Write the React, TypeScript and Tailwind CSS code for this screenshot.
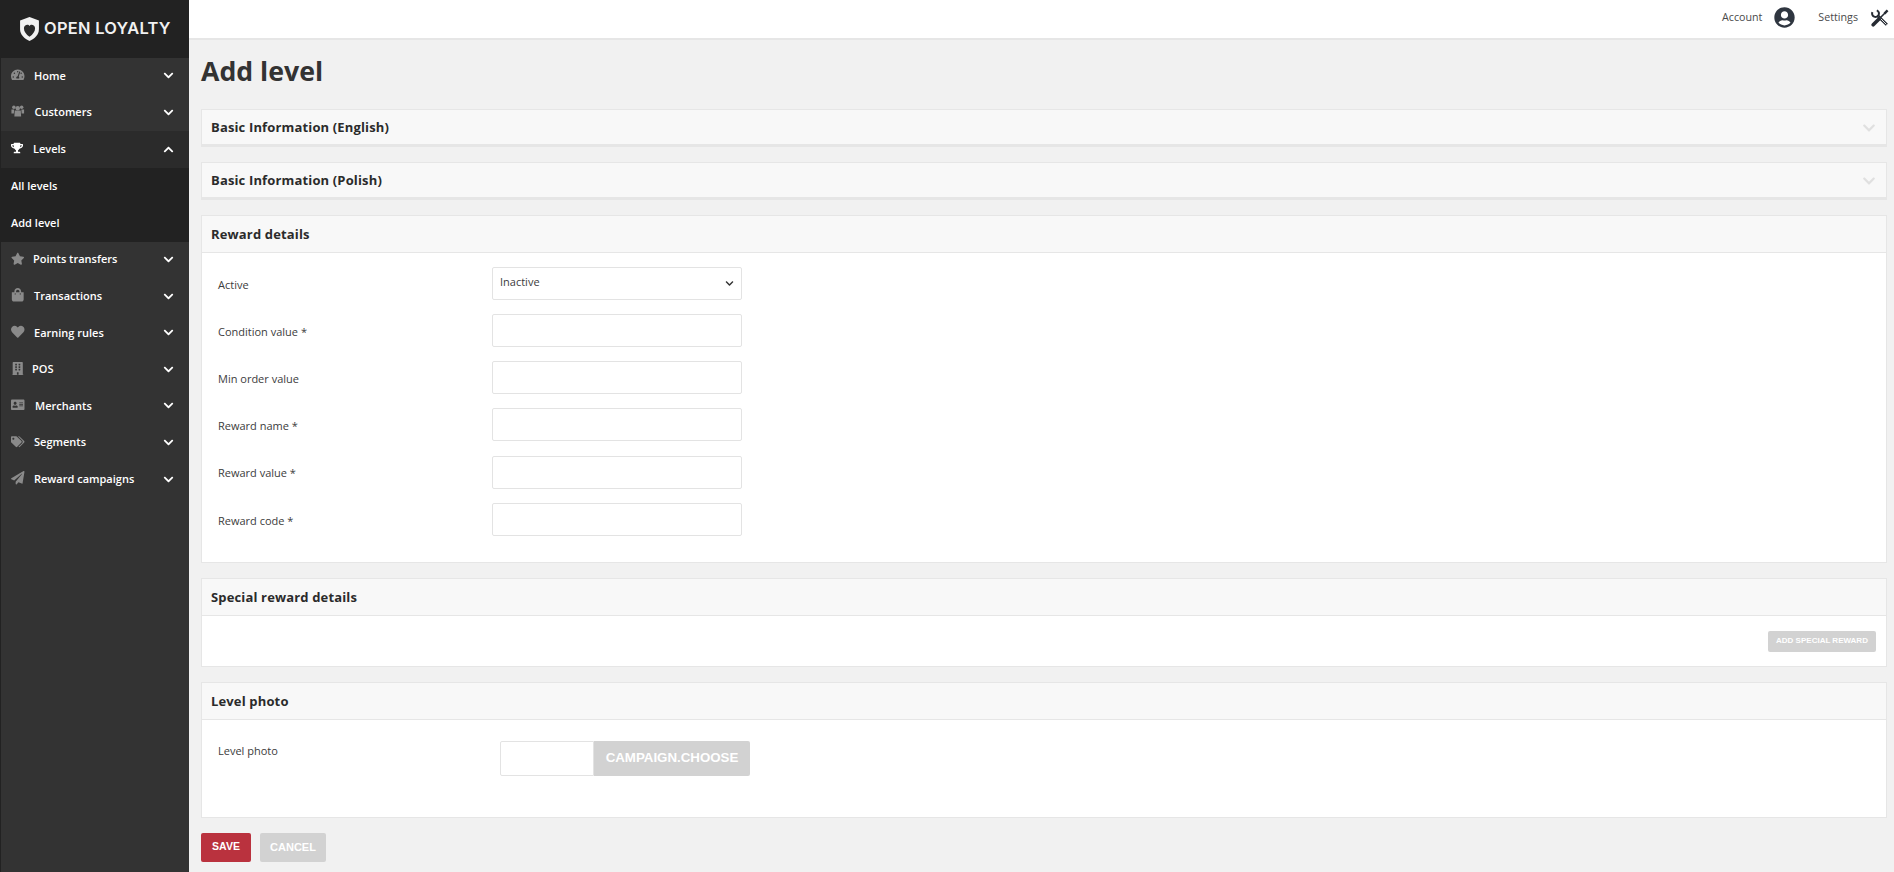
import React from "react";
import {
  FaAddressCard,
  FaBuilding,
  FaChevronDown,
  FaChevronUp,
  FaHeart,
  FaPaperPlane,
  FaShoppingBag,
  FaStar,
  FaTachometerAlt,
  FaTags,
  FaTrophy,
  FaUserCircle,
} from "react-icons/fa";

function GroupIcon({ className }: { className?: string }) {
  return (
    <svg viewBox="0 0 16 14" fill="currentColor" className={className} width="1em" height="0.9em">
      <circle cx="3.4" cy="2.4" r="2.1" />
      <circle cx="12.6" cy="2.4" r="2.1" />
      <circle cx="8" cy="3.6" r="2.6" />
      <path d="M0.5 5h3.2L3.4 10H0.5zM12.3 5h3.2v5h-2.9zM4.4 6.4h7.2l.4 7H4z" />
    </svg>
  );
}

function ToolsIcon() {
  return (
    <svg viewBox="0 0 18 18" className="h-[18px] w-[18px] text-[#262b33]" fill="none" stroke="currentColor">
      <path d="M6.5 6.5 15.8 15.8" strokeWidth="3" />
      <path d="M7.5 7.5 15.4 15.4" strokeWidth="0.9" stroke="#ffffff" />
      <path d="M1.4 3.2A3.4 3.4 0 1 0 5.8 1.4" strokeWidth="2" />
      <path d="M2.2 15.8 8 10" strokeWidth="3.6" strokeLinecap="round" />
      <path d="M8 10 14 4" strokeWidth="1.6" />
      <path d="M13.4 4.6 16.6 1.4" strokeWidth="2.4" />
    </svg>
  );
}

const topItems = [
  { label: "Home", icon: FaTachometerAlt, gap: "w-[23px]" },
  { label: "Customers", icon: GroupIcon, gap: "w-[23.5px]" },
];

const bottomItems = [
  { label: "Points transfers", icon: FaStar, gap: "w-[22px]" },
  { label: "Transactions", icon: FaShoppingBag, gap: "w-[23px]" },
  { label: "Earning rules", icon: FaHeart, gap: "w-[23px]" },
  { label: "POS", icon: FaBuilding, gap: "w-[21px]" },
  { label: "Merchants", icon: FaAddressCard, gap: "w-[24px]" },
  { label: "Segments", icon: FaTags, gap: "w-[23px]" },
  { label: "Reward campaigns", icon: FaPaperPlane, gap: "w-[23px]" },
];

const fields = ["Condition value *", "Min order value", "Reward name *", "Reward value *", "Reward code *"];

function NavRow({ label, icon: Icon, gap }: { label: string; icon: React.ElementType; gap: string }) {
  return (
    <div className="flex h-[36.6px] items-center pb-[1px] pl-[10px] pr-[15px] text-[11px] font-semibold text-white">
      <span className={`${gap} shrink-0`}>
        <Icon className="-mt-[2px] text-[13.5px] text-[#8a8a8a]" />
      </span>
      <span className="flex-1">{label}</span>
      <FaChevronDown className="text-[11px]" />
    </div>
  );
}

function Card({ title, children, collapsed }: { title: string; children?: React.ReactNode; collapsed?: boolean }) {
  return (
    <section className={`mb-[15px] border border-[#e6e6e6] bg-white ${collapsed ? "border-b-[3px]" : ""}`}>
      <header
        className={`flex items-center justify-between bg-[#f8f8f8] pl-[9px] pr-[10px] ${collapsed ? "h-[34px] pt-[2px]" : "h-[37px] border-b border-[#e6e6e6] pt-[1px]"}`}
      >
        <h2 className="text-[13px] font-bold tracking-[0.15px] text-[#2b2b2b]">{title}</h2>
        {collapsed && <FaChevronDown className="text-[14px] text-[#e0e0e0]" />}
      </header>
      {children}
    </section>
  );
}

function TextField({ label }: { label: string }) {
  return (
    <div className="flex h-[33px] items-center">
      <label className="w-[274px] pt-[3px] text-[11px] text-[#3c3c3c]">{label}</label>
      <div className="h-[33px] w-[250px] rounded-[2px] border border-[#e3e3e3] bg-white" />
    </div>
  );
}

export default function App() {
  return (
    <div className="flex h-screen w-full overflow-hidden bg-[#f1f1f1] font-['Open_Sans',sans-serif]">
      <aside className="w-[189px] shrink-0 border-l border-[#222] bg-[#333333]">
        <div className="flex h-[58px] items-center bg-[#222222] pl-[18px]">
          <svg viewBox="0 0 24 28" className="h-[24px] w-[21px]">
            <path d="M12 0 L23 4 V14 C23 21 18 25 12 28 C6 25 1 21 1 14 V4 Z" fill="#f1f1f1" />
            <path d="M12 23 C8 20 5.5 17 5.5 13 C5.5 10.5 7.5 9 9.5 9 C10.6 9 11.5 9.6 12 10.4 C12.5 9.6 13.4 9 14.5 9 C16.5 9 18.5 10.5 18.5 13 C18.5 17 16 20 12 23 Z" fill="#2a2a2a" />
          </svg>
          <span className="mb-[2px] ml-[4px] font-['Inter',sans-serif] text-[16.4px] font-semibold tracking-[0.3px] text-[#f1f1f1]">
            OPEN LOYALTY
          </span>
        </div>
        {topItems.map((item) => (
          <NavRow key={item.label} {...item} />
        ))}
        <div className="flex h-[36.6px] items-center bg-[#2b2b2b] pl-[10px] pr-[15px] text-[11px] font-semibold text-white">
          <span className="w-[22px] shrink-0">
            <FaTrophy className="-mt-[2px] text-[12px]" />
          </span>
          <span className="flex-1">Levels</span>
          <FaChevronUp className="text-[11px]" />
        </div>
        <div className="bg-[#222222] text-[11px] font-semibold text-white">
          <div className="flex h-[37px] items-center pl-[10px]">All levels</div>
          <div className="flex h-[37px] items-center pl-[10px]">Add level</div>
        </div>
        {bottomItems.map((item) => (
          <NavRow key={item.label} {...item} />
        ))}
      </aside>

      <div className="flex min-w-0 flex-1 flex-col">
        <div className="flex h-[40px] shrink-0 items-center justify-end border-b-2 border-[#e6e6e6] bg-white pb-[3px] pr-[5px] text-[10.7px] text-[#4a4a4a]">
          <span>Account</span>
          <FaUserCircle className="ml-[12px] text-[21px] text-[#2f3640]" />
          <span className="ml-[23px]">Settings</span>
          <span className="ml-[13px]">
            <ToolsIcon />
          </span>
        </div>

        <main className="flex-1 pl-[12px] pr-[7px]">
          <h1 className="flex h-[69px] items-center pb-[7px] text-[26.7px] font-bold text-[#333333]">Add level</h1>

          <Card title="Basic Information (English)" collapsed />
          <Card title="Basic Information (Polish)" collapsed />

          <Card title="Reward details">
            <div className="flex flex-col gap-[14.3px] pb-[25.8px] pl-[16px] pt-[13.5px]">
              <div className="flex h-[33px] items-center">
                <label className="w-[274px] pt-[4px] text-[11px] text-[#3c3c3c]">Active</label>
                <div className="flex h-[33px] w-[250px] items-center justify-between rounded-[2px] border border-[#e3e3e3] bg-white pb-[1px] pl-[7px] pr-[7px] text-[11px] text-[#3c3c3c]">
                  Inactive
                  <FaChevronDown className="mt-[1px] text-[9px] text-[#333]" />
                </div>
              </div>
              {fields.map((field) => (
                <TextField key={field} label={field} />
              ))}
            </div>
          </Card>

          <Card title="Special reward details">
            <div className="flex h-[50px] items-center justify-end pr-[10px] pt-[1px]">
              <button className="h-[21px] w-[108px] rounded-[2px] bg-[#d2d2d2] font-['Liberation_Sans',sans-serif] text-[8px] font-bold text-white">
                ADD SPECIAL REWARD
              </button>
            </div>
          </Card>

          <Card title="Level photo">
            <div className="flex h-[97px] pl-[16px] pt-[21px]">
              <label className="w-[282px] pt-[2px] text-[11px] text-[#3c3c3c]">Level photo</label>
              <div className="h-[35px] w-[94px] rounded-l-[2px] border border-[#e3e3e3] bg-white" />
              <button className="h-[35px] w-[156px] rounded-r-[2px] bg-[#d2d2d2] pb-[1px] font-['Liberation_Sans',sans-serif] text-[13.3px] font-bold text-white">
                CAMPAIGN.CHOOSE
              </button>
            </div>
          </Card>

          <div className="flex gap-[9px]">
            <button className="h-[29px] w-[50px] rounded-[2px] bg-[#ba323e] font-['Liberation_Sans',sans-serif] text-[10.5px] font-bold text-white">
              SAVE
            </button>
            <button className="h-[29px] w-[66px] rounded-[2px] bg-[#d2d2d2] font-['Liberation_Sans',sans-serif] text-[11px] font-bold text-white">
              CANCEL
            </button>
          </div>
        </main>
      </div>
    </div>
  );
}
